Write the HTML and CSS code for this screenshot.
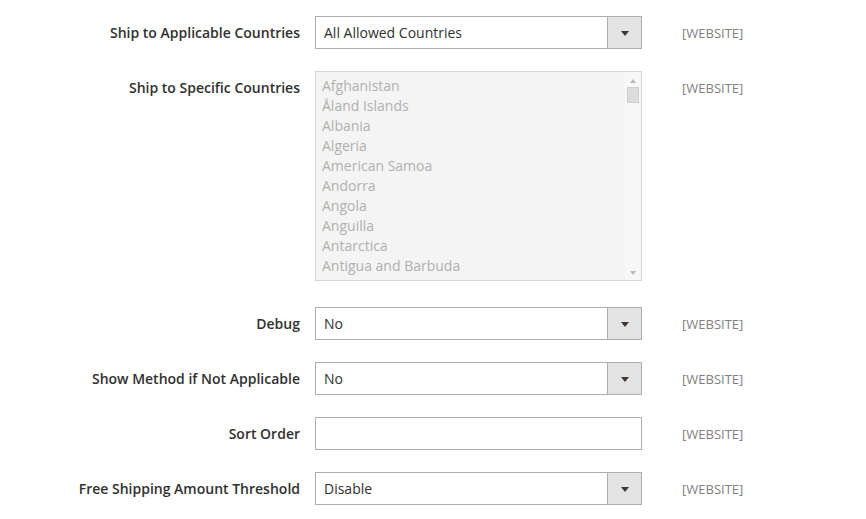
FILE: index.html
```html
<!DOCTYPE html>
<html>
<head>
<meta charset="utf-8">
<link rel="stylesheet" href="styles.css">
</head>
<body>
<div class="form">
  <div class="row">
    <div class="label">Ship to Applicable Countries</div>
    <div class="select"><span class="value">All Allowed Countries</span><span class="btn"><span class="arrow"></span></span></div>
    <div class="scope">[WEBSITE]</div>
  </div>
  <div class="row row-multi">
    <div class="label">Ship to Specific Countries</div>
    <div class="multi">
      <ul class="options">
        <li>Afghanistan</li>
        <li>Åland Islands</li>
        <li>Albania</li>
        <li>Algeria</li>
        <li>American Samoa</li>
        <li>Andorra</li>
        <li>Angola</li>
        <li>Anguilla</li>
        <li>Antarctica</li>
        <li>Antigua and Barbuda</li>
      </ul>
      <div class="scrollbar">
        <span class="up"></span>
        <span class="thumb"></span>
        <span class="fill"></span>
        <span class="down"></span>
      </div>
    </div>
    <div class="scope">[WEBSITE]</div>
  </div>
  <div class="row">
    <div class="label">Debug</div>
    <div class="select"><span class="value">No</span><span class="btn"><span class="arrow"></span></span></div>
    <div class="scope">[WEBSITE]</div>
  </div>
  <div class="row">
    <div class="label">Show Method if Not Applicable</div>
    <div class="select"><span class="value">No</span><span class="btn"><span class="arrow"></span></span></div>
    <div class="scope">[WEBSITE]</div>
  </div>
  <div class="row">
    <div class="label">Sort Order</div>
    <div class="input"></div>
    <div class="scope">[WEBSITE]</div>
  </div>
  <div class="row">
    <div class="label">Free Shipping Amount Threshold</div>
    <div class="select"><span class="value">Disable</span><span class="btn"><span class="arrow"></span></span></div>
    <div class="scope">[WEBSITE]</div>
  </div>
</div>
</body>
</html>
```

FILE: styles.css
```css
html, body {
  margin: 0;
  padding: 0;
  background: #ffffff;
}
body {
  font-family: "Open Sans", "Liberation Sans", sans-serif;
  font-size: 14px;
  color: #303030;
}
.form {
  padding-top: 16px;
  display: flex;
  flex-direction: column;
  gap: 22px;
}
.row {
  display: grid;
  grid-template-columns: 300px 342px auto;
  align-items: start;
}
.row-multi {
  margin-bottom: 4px;
}
.label {
  text-align: right;
  font-weight: 600;
  line-height: 33px;
  color: #303030;
}
.select, .input, .multi {
  margin-left: 15px;
  width: 327px;
  box-sizing: border-box;
}
.select {
  height: 33px;
  border: 1px solid #adadad;
  display: flex;
  align-items: stretch;
  background: #fff;
}
.select .value {
  flex: 1;
  padding-left: 8px;
  line-height: 31px;
}
.select .btn {
  width: 33px;
  border-left: 1px solid #adadad;
  background: #e3e3e3;
  display: flex;
  align-items: center;
  justify-content: center;
}
.arrow {
  width: 0;
  height: 0;
  border-left: 4px solid transparent;
  border-right: 4px solid transparent;
  border-top: 5px solid #41362f;
  margin-top: 1px;
}
.input {
  height: 33px;
  border: 1px solid #adadad;
  background: #fff;
}
.multi {
  height: 210px;
  border: 1px solid #d6d6d6;
  background: #f4f4f4;
  display: flex;
  overflow: hidden;
}
.options {
  list-style: none;
  margin: 0;
  padding: 4px 0 0 6px;
  flex: 1;
  color: #b0b0b0;
  line-height: 20px;
}
.scrollbar {
  width: 16px;
  background: #f7f7f7;
  display: flex;
  flex-direction: column;
  align-items: center;
}
.up, .down {
  width: 0;
  height: 0;
  border-left: 3.5px solid transparent;
  border-right: 3.5px solid transparent;
}
.up {
  border-bottom: 4px solid #b8b8b8;
  margin-top: 7px;
}
.down {
  border-top: 4px solid #b8b8b8;
  margin-bottom: 5px;
}
.thumb {
  width: 12px;
  height: 16px;
  margin-top: 4px;
  background: #dcdcdc;
  box-sizing: border-box;
  border: 1px solid #cfcfcf;
}
.fill {
  flex: 1;
}
.scope {
  margin-left: 40px;
  font-size: 13px;
  line-height: 32px;
  padding-top: 1px;
  color: #808080;
}
```
